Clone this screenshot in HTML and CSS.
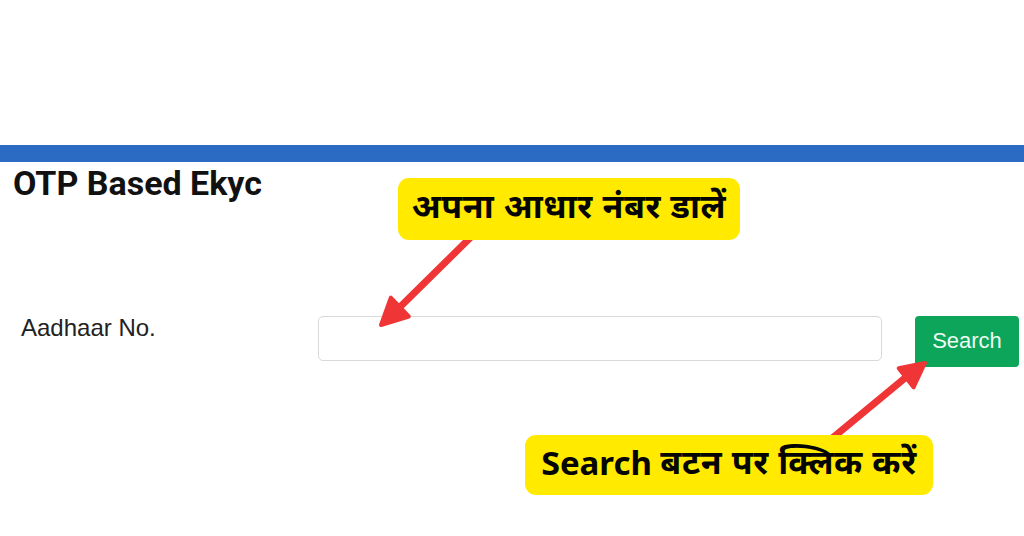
FILE: index.html
```html
<!DOCTYPE html>
<html lang="hi">
<head>
<meta charset="utf-8">
<title>OTP Based Ekyc</title>
<link rel="stylesheet" href="styles.css">
</head>
<body>
<div class="page">
  <div class="topbar"></div>
  <h1 class="title">OTP Based Ekyc</h1>
  <form class="form-row" onsubmit="return false">
    <label class="label" for="aadhaar">Aadhaar No.</label>
    <input class="input" id="aadhaar" type="text">
    <button class="btn" type="button">Search</button>
  </form>

  <svg class="arrows" width="1024" height="536" viewBox="0 0 1024 536">
    <g stroke="#ef3535" fill="#ef3535" stroke-linecap="round" stroke-linejoin="round">
      <line x1="470" y1="238" x2="401" y2="306" stroke-width="7"/>
      <polygon points="381,325 408.8,316.5 390.8,297.7" stroke-width="4"/>
      <line x1="830" y1="440" x2="905" y2="378" stroke-width="7"/>
      <polygon points="925,363 913.5,387.3 898.7,368.3" stroke-width="4"/>
    </g>
  </svg>

  <div class="callout callout-1">अपना आधार नंबर डालें</div>
  <div class="callout callout-2"><span class="latin">Search</span>&nbsp;<span class="deva">बटन पर क्लिक करें</span></div>
</div>
</body>
</html>
```

FILE: styles.css
```css
html, body {
  margin: 0;
  padding: 0;
  background: #ffffff;
}

.page {
  position: relative;
  width: 1024px;
  height: 536px;
  overflow: hidden;
  padding-top: 145px;
  box-sizing: border-box;
}

.topbar {
  height: 17px;
  background: #2c6bc4;
}

.title {
  margin: 1px 0 0 0;
  padding-left: 13px;
  font-family: Roboto, "Liberation Sans", sans-serif;
  font-weight: 700;
  font-size: 34px;
  line-height: 40px;
  color: #111111;
}

.form-row {
  display: flex;
  align-items: flex-start;
  margin: 113px 0 0 0;
}

.label {
  width: 318px;
  flex: none;
  box-sizing: border-box;
  padding-left: 21px;
  font-family: "Liberation Sans", Arial, sans-serif;
  font-size: 24px;
  line-height: 24px;
  color: #222222;
}

.input {
  width: 564px;
  height: 45px;
  flex: none;
  box-sizing: border-box;
  margin: 0;
  border: 1px solid #d9d9d9;
  border-radius: 5px;
  background: #ffffff;
  outline: none;
}

.btn {
  width: 104px;
  height: 51px;
  flex: none;
  margin: 0 0 0 33px;
  border: none;
  border-radius: 4px;
  background: #0ca55a;
  color: #eefcf3;
  font-family: "Liberation Sans", Arial, sans-serif;
  font-size: 22px;
  padding: 0 0 2px 0;
}

.arrows {
  position: absolute;
  left: 0;
  top: 0;
  pointer-events: none;
}

.callout {
  position: absolute;
  box-sizing: border-box;
  display: flex;
  align-items: center;
  justify-content: center;
  background: #ffea00;
  border-radius: 11px;
  color: #050505;
  font-family: "Noto Sans Devanagari", "Noto Sans", sans-serif;
  font-weight: 700;
  white-space: nowrap;
}

.callout-1 {
  left: 398px;
  top: 178px;
  width: 342px;
  height: 62px;
  font-size: 34px;
  letter-spacing: 0.6px;
  padding-top: 2px;
}

.callout-2 {
  left: 525px;
  top: 435px;
  width: 408px;
  height: 60px;
  font-size: 32px;
  padding-top: 2px;
}

.callout-2 .latin {
  font-size: 33px;
}

.callout-2 .deva {
  font-size: 34px;
  letter-spacing: 0.6px;
}
```
